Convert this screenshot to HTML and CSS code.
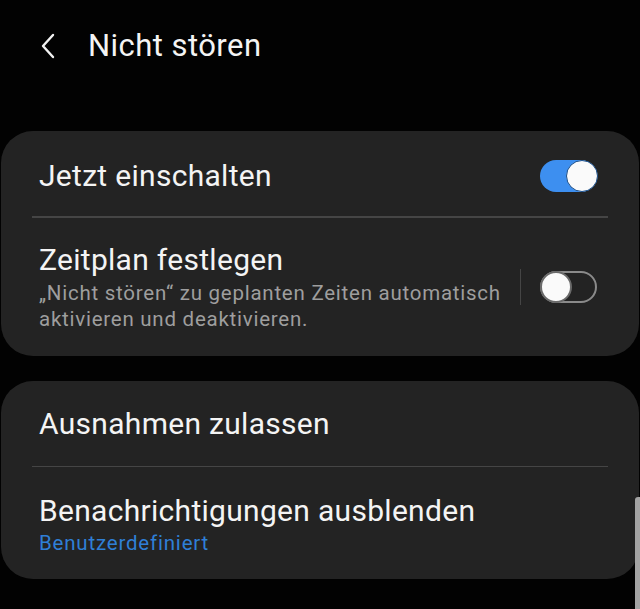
FILE: index.html
```html
<!DOCTYPE html>
<html lang="de">
<head>
<meta charset="utf-8">
<link rel="stylesheet" href="styles.css">
</head>
<body>
<div class="screen">
  <header class="appbar">
    <svg class="back" width="16" height="26" viewBox="0 0 16 26"><path d="M13 2 L3 13 L13 24" fill="none" stroke="#f2f2f2" stroke-width="2.4" stroke-linecap="round" stroke-linejoin="round"/></svg>
    <h1 class="title">Nicht stören</h1>
  </header>

  <section class="card">
    <div class="row row-first">
      <div class="text"><div class="label">Jetzt einschalten</div></div>
      <div class="switch on"><div class="knob"></div></div>
    </div>
    <div class="sep"></div>
    <div class="row row-second">
      <div class="text">
        <div class="label">Zeitplan festlegen</div>
        <div class="sub">„Nicht stören“ zu geplanten Zeiten automatisch aktivieren und deaktivieren.</div>
      </div>
      <div class="vdiv"></div>
      <div class="switch off"><div class="knob"></div></div>
    </div>
  </section>

  <section class="card card2">
    <div class="row row-a">
      <div class="text"><div class="label">Ausnahmen zulassen</div></div>
    </div>
    <div class="sep"></div>
    <div class="row row-b">
      <div class="text">
        <div class="label">Benachrichtigungen ausblenden</div>
        <div class="link">Benutzerdefiniert</div>
      </div>
    </div>
  </section>

  <div class="scrollbar"></div>
</div>
</body>
</html>
```

FILE: styles.css
```css
html, body {
  margin: 0;
  padding: 0;
  background: #000;
}
.screen {
  position: relative;
  width: 640px;
  height: 609px;
  overflow: hidden;
  background: #020202;
  font-family: Roboto, "Noto Sans", sans-serif;
  color: #f4f4f4;
}
.appbar {
  height: 131px;
  display: flex;
  align-items: flex-start;
  box-sizing: border-box;
  padding-top: 28px;
}
.back {
  margin-left: 40px;
  margin-top: 5px;
}
.title {
  margin: 0 0 0 32px;
  font-size: 31px;
  font-weight: 400;
  line-height: 36px;
  letter-spacing: 0.45px;
}
.card {
  margin: 0 1px;
  background: #232323;
  border-radius: 32px;
}
.card2 {
  margin-top: 25px;
}
.row {
  display: flex;
  align-items: center;
  padding: 0 42px 0 38px;
  box-sizing: border-box;
}
.row-first { height: 85px; padding-top: 4px; }
.row-second { height: 138px; padding-top: 0; }
.row-a { height: 85px; padding-top: 2px; }
.row-b { height: 112px; padding-top: 4px; }
.text {
  flex: 1;
}
.label {
  font-size: 30px;
  line-height: 36px;
  letter-spacing: 0.3px;
}
.sub {
  font-size: 20.5px;
  line-height: 26px;
  color: #9e9e9e;
  margin-top: 2px;
  letter-spacing: 0.75px;
  max-width: 480px;
}
.link {
  font-size: 20.5px;
  line-height: 28px;
  color: #2f7fd6;
  letter-spacing: 0.8px;
}
.sep {
  height: 1.5px;
  background: #454545;
  margin: 0 31px;
}
.vdiv {
  width: 1px;
  height: 36px;
  background: #454545;
  margin: 0 19px 0 0;
  align-self: center;
}
.switch {
  width: 57px;
  height: 32px;
  border-radius: 16px;
  position: relative;
  box-sizing: border-box;
  flex: none;
}
.switch.on {
  background: #3d8ff0;
}
.switch.off {
  border: 2px solid #8a8a8a;
}
.knob {
  position: absolute;
  width: 32px;
  height: 32px;
  border-radius: 50%;
  background: #fafafa;
  box-sizing: border-box;
  top: 50%;
  margin-top: -16px;
}
.switch.on .knob {
  right: -1px;
  border: 1.5px solid #1b4f8a;
}
.switch.off .knob {
  left: -2px;
  border: 2px solid #6a6a6a;
}
.scrollbar {
  position: absolute;
  right: 0;
  top: 497px;
  width: 5px;
  height: 120px;
  background: #a3a3a3;
  border-radius: 3px 0 0 0;
}
```
